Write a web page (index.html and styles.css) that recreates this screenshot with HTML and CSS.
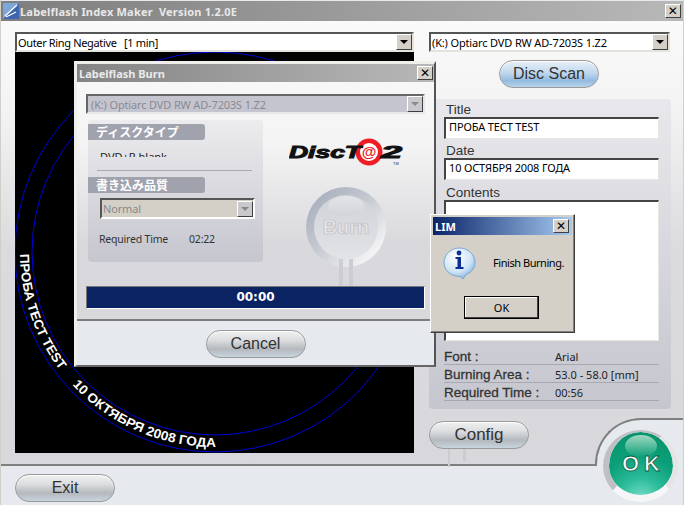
FILE: index.html
```html
<!DOCTYPE html>
<html lang="en">
<head>
<meta charset="utf-8">
<title>Labelflash Index Maker</title>
<link rel="stylesheet" href="styles.css">
</head>
<body>
<div class="app">
  <header class="titlebar">
    <svg class="app-icon" width="16" height="16" viewBox="0 0 16 16"><rect width="16" height="16" fill="#7ea6d8"/><path d="M0 16 16 0V16Z" fill="#3d66b0"/><path d="M2 13 14 2M3 14l10-5" stroke="#fff" stroke-width="1.2"/></svg>
    <span class="titlebar-text">Labelflash Index Maker&nbsp; Version 1.2.0E</span>
    <span class="close-btn">✕</span>
  </header>
  <main class="main">
    <section class="left">
      <div class="select select-wide"><span class="select-text">Outer Ring Negative&nbsp;&nbsp; [1 min]</span><span class="arrow"></span></div>
      <div class="canvas">
        <svg width="399" height="401" viewBox="0 0 399 401">
          <defs><path id="ring" d="M5 200A195 195 0 0 0 395 200"/></defs>
          <circle cx="200" cy="200" r="200" class="ring-line"/>
          <circle cx="200" cy="200" r="183" class="ring-line"/>
          <text class="ring-text"><textPath href="#ring" startOffset="2" textLength="125" lengthAdjust="spacingAndGlyphs">ПРОБА ТЕСТ TEST</textPath></text>
          <text class="ring-text"><textPath href="#ring" startOffset="146" textLength="161" lengthAdjust="spacingAndGlyphs">10 ОКТЯБРЯ 2008 ГОДА</textPath></text>
        </svg>
      </div>
    </section>
    <section class="right">
      <div class="select select-drive"><span class="select-text">(K:) Optiarc DVD RW AD-7203S 1.Z2</span><span class="arrow"></span></div>
      <button class="pill pill-blue scan">Disc Scan</button>
      <div class="panel">
        <label class="field-label">Title</label>
        <div class="input">ПРОБА ТЕСТ TEST</div>
        <label class="field-label">Date</label>
        <div class="input input-date">10 ОСТЯБРЯ 2008 ГОДА</div>
        <label class="field-label">Contents</label>
        <div class="input textarea"></div>
        <dl class="stats">
          <div class="stat"><dt>Font :</dt><dd>Arial</dd></div>
          <div class="stat"><dt>Burning Area :</dt><dd>53.0 - 58.0 [mm]</dd></div>
          <div class="stat"><dt>Required Time :</dt><dd>00:56</dd></div>
        </dl>
      </div>
      <button class="pill config">Config</button>
      <div class="pipes"><i class="pipe-long"></i><i class="pipe-short"></i></div>
    </section>
  </main>
  <footer class="footer">
    <button class="pill">Exit</button>
  </footer>

  <div class="ok-notch"></div>
  <button class="ok-btn"><span class="ok-gloss"></span><span class="ok-text">OK</span></button>

  <div class="burn">
    <div class="burn-title"><span>Labelflash Burn</span><span class="close-btn">✕</span></div>
    <div class="burn-body">
      <div class="select select-disabled"><span class="select-text">(K:) Optiarc DVD RW AD-7203S 1.Z2</span><span class="arrow arrow-off"></span></div>
      <div class="burn-row">
        <div class="burn-panel">
          <div class="tag">ディスクタイプ</div>
          <div class="clip"><span>DVD+R blank</span></div>
          <div class="rule"></div>
          <div class="tag tag-second">書き込み品質</div>
          <div class="select select-quality"><span class="select-text">Normal</span><span class="arrow arrow-off"></span></div>
          <div class="req"><span>Required Time</span><span>02:22</span></div>
        </div>
        <div class="burn-side">
          <svg class="logo" width="114" height="30" viewBox="0 0 114 30">
            <circle cx="80" cy="15" r="13.5" fill="#ee1c25"/>
            <circle cx="80" cy="15" r="9" fill="#fff"/>
            <text x="0" y="21" class="logo-text" textLength="72" lengthAdjust="spacingAndGlyphs">DiscT</text>
            <text x="80" y="20" class="logo-at" text-anchor="middle">@</text>
            <text x="92" y="21" class="logo-text" textLength="21" lengthAdjust="spacingAndGlyphs">2</text>
            <text x="104" y="28" class="logo-tm">TM</text>
          </svg>
          <div class="burn-btn"><div class="burn-face"><span class="burn-label">Burn</span></div></div>
          <div class="burn-pipes"><i></i><i></i></div>
        </div>
      </div>
      <div class="progress">00:00</div>
    </div>
    <div class="burn-foot"><button class="pill">Cancel</button></div>
  </div>

  <div class="lim">
    <div class="lim-title"><span>LIM</span><span class="close-btn">✕</span></div>
    <div class="lim-msg">
      <svg width="33" height="33" viewBox="0 0 33 33">
        <defs><radialGradient id="bub" cx=".4" cy=".3" r=".8"><stop offset="0" stop-color="#fff"/><stop offset=".6" stop-color="#cfe4f6"/><stop offset="1" stop-color="#6ca2d6"/></radialGradient></defs>
        <path d="M16.5 1C25 1 32 7.500 32 15.500 32 22 27.500 26 23 27.500L20 32 17.500 30 17 29.500C8 29.500 1 23.500 1 15.500 1 7.500 8 1 16.500 1Z" fill="url(#bub)" stroke="#7aa8d4"/>
        <circle cx="16" cy="6" r="2.400" fill="#0c2f94"/>
        <path d="M12.500 10H18V20H20.500V22H12.500V20H14.500V12H12.500Z" fill="#0c2f94"/>
      </svg>
      <span>Finish Burning.</span>
    </div>
    <button class="lim-ok">OK</button>
  </div>
</div>
</body>
</html>
```

FILE: styles.css
```css
* { box-sizing: border-box; }
html, body { margin: 0; padding: 0; }
body { width: 684px; height: 505px; overflow: hidden; font-family: "Noto Sans", "Liberation Sans", sans-serif; }

.app {
  position: relative;
  width: 684px;
  height: 505px;
  overflow: hidden;
  display: flex;
  flex-direction: column;
  background: #e6eaee;
  border-left: 1px solid #d0cfca;
  border-right: 1px solid #d0cfca;
}

.titlebar {
  height: 20px;
  margin-top: 1px;
  flex: none;
  display: flex;
  align-items: center;
  padding: 0 2px 0 2px;
  background: linear-gradient(90deg, #7e7e7e, #b8b8b8);
  color: #e8e8e8;
  font: bold 11px "Noto Sans", sans-serif;
  letter-spacing: 0.2px;
}
.app-icon { flex: none; margin-right: 1px; }
.titlebar-text { flex: 1; }

.close-btn {
  flex: none;
  width: 16px;
  height: 14px;
  display: flex;
  align-items: center;
  justify-content: center;
  background: #d4d0c8;
  border: 1px solid;
  border-color: #fff #404040 #404040 #fff;
  color: #000;
  font: bold 12px "DejaVu Sans", sans-serif;
}

.main {
  height: 445px;
  flex: none;
  display: flex;
  gap: 15px;
  padding: 11px 0 0 14px;
  background: linear-gradient(180deg, #fafafa 0, #f3f3f3 90px, #dbdbdf 230px, #d8d8dc 100%);
  border-bottom: 2px solid #7f7f7f;
}
.left { width: 399px; display: flex; flex-direction: column; }
.right { width: 242px; display: flex; flex-direction: column; align-items: flex-start; }

.select {
  display: flex;
  align-items: center;
  flex: none;
  height: 20px;
  background: #fff;
  border: 2px solid;
  border-color: #555 #e4e2dc #e4e2dc #555;
  font: 11px "Noto Sans", sans-serif;
  color: #000;
}
.select-text { flex: 1; padding-left: 1px; white-space: nowrap; overflow: hidden; letter-spacing: -0.15px; }
.select-wide { width: 399px; }
.select-wide .select-text { letter-spacing: -0.35px; }
.select-drive { width: 241px; }
.arrow {
  flex: none;
  width: 16px;
  height: 16px;
  background: #d4d0c8;
  border: 1px solid;
  border-color: #fff #404040 #404040 #fff;
  position: relative;
}
.arrow::after {
  content: "";
  position: absolute;
  left: 3px;
  top: 5px;
  border: 4px solid transparent;
  border-top: 4px solid #000;
  border-bottom: 0;
}
.arrow-off { background: #c9c8cc; }
.arrow-off::after { border-top-color: #8a8a8a; }

.canvas { height: 401px; background: #000; flex: none; }
.canvas svg { display: block; }
.ring-line { fill: none; stroke: #0000d8; stroke-width: 1; }
.ring-text { fill: #fff; font: bold 13px "Liberation Sans", sans-serif; }

.pill {
  width: 100px;
  height: 28px;
  flex: none;
  padding: 0;
  border: 1px solid #9a9a9a;
  border-radius: 14px;
  background: linear-gradient(180deg, #f0f0f0 0, #dcdee0 35%, #b4b9bd 70%, #c8d4de 100%);
  color: #333;
  font: 16px "Liberation Sans", sans-serif;
  box-shadow: inset 0 1px 1px #fff;
}
.pill-blue { background: linear-gradient(180deg, #e8f0f8 0, #c0d8ee 45%, #94bbdf 75%, #b6d2ea 100%); }
.scan { margin: 8px 0 0 70px; }

.panel {
  width: 242px;
  height: 310px;
  margin-top: 11px;
  padding: 4px 12px 0 15px;
  border-radius: 4px;
  background: linear-gradient(180deg, #e8e8ec, #c5c6ce);
  flex: none;
}
.field-label { display: block; height: 14px; margin-left: 2px; font: 13.5px/14px "Liberation Sans", sans-serif; color: #333; }
.input {
  width: 215px;
  height: 22px;
  margin-bottom: 5px;
  padding: 1px 3px 0 3px;
  background: #fff;
  border: 1px solid;
  border-width: 2px 1px 1px 2px;
  border-color: #444 #e8e6e0 #e8e6e0 #444;
  font: 11px/14px "Noto Sans", sans-serif;
  letter-spacing: -0.15px;
  color: #000;
}
.input-date { margin-bottom: 6px; }
.textarea { height: 141px; margin-bottom: 0; }
.stats { margin: 6px 0 0; padding: 0; width: 215px; }
.stat {
  display: flex;
  height: 18px;
  padding-top: 1px;
  align-items: center;
  border-bottom: 1px solid #a8a8b2;
}
.stat dt { width: 111px; font: 13.5px "Liberation Sans", sans-serif; color: #333; -webkit-text-stroke: 0.3px #333; }
.stat dd { margin: 0; font: 11px "Noto Sans", sans-serif; color: #222; }

.config { margin-top: 12px; font-size: 17px; }
.pipes { display: flex; align-items: flex-start; gap: 13px; margin-left: 19px; flex: none; }
.pipe-long { width: 2px; height: 18px; background: #ccccd0; }
.pipe-short { width: 3px; height: 12px; background: #ccccd0; }

.footer { flex: 1; padding: 8px 0 0 14px; }

.ok-notch {
  position: absolute;
  left: 594px;
  top: 418px;
  width: 90px;
  height: 48px;
  background: #e6eaee;
  border-left: 2px solid #7f7f7f;
  border-top: 2px solid #7f7f7f;
  border-top-left-radius: 46px;
}
.ok-btn {
  position: absolute;
  left: 602px;
  top: 430px;
  width: 75px;
  height: 72px;
  padding: 0;
  border-style: solid;
  border-width: 2px 5px 7px 6px;
  border-color: #bfc0c4 #e4e4e6 #f6f6f8 #c0c0c4;
  border-radius: 50%;
  background: radial-gradient(circle at 50% 108%, #7be0cc 0, #2abb98 30%, #0ba079 58%, #079068 100%);
  background-clip: padding-box;
  overflow: hidden;
  display: flex;
  align-items: center;
  justify-content: center;
}
.ok-gloss {
  position: absolute;
  left: 16px;
  top: 3px;
  width: 32px;
  height: 22px;
  border-radius: 50%;
  background: linear-gradient(180deg, #9fd8c2, #0ea078);
}
.ok-text {
  position: relative;
  color: #fff;
  font: bold 22px "Liberation Sans", sans-serif;
  letter-spacing: 5px;
  margin-left: 5px;
  -webkit-text-stroke: 0.8px #0a5f46;
}

/* Burn dialog */
.burn {
  position: absolute;
  left: 73px;
  top: 61px;
  width: 362px;
  height: 306px;
  display: flex;
  flex-direction: column;
  background: linear-gradient(180deg, #f8f8f8 0, #f4f4f4 80px, #d9d9dd 180px, #d8d8dc 100%);
  border-style: solid;
  border-width: 3px 2px 2px 3px;
  border-color: #f0efec #555 #666 #f0efec;
}
.burn-title {
  height: 18px;
  flex: none;
  display: flex;
  align-items: center;
  justify-content: space-between;
  padding: 0 1px 0 2px;
  background: linear-gradient(90deg, #848484, #b8b8b8);
  color: #eaeaea;
  font: bold 11px "Noto Sans", sans-serif;
}
.burn-body { flex: none; padding: 12px 9px 0 9px; display: flex; flex-direction: column; }
.select-disabled {
  width: 339px;
  height: 20px;
  background: #c5c5cf;
  color: #8a8a92;
  border-color: #666 #e8e8e8 #e8e8e8 #666;
}
.select-disabled .select-text { padding-left: 3px; }
.burn-row { display: flex; align-items: flex-start; height: 166px; margin-top: 6px; flex: none; }
.burn-panel {
  width: 175px;
  height: 142px;
  margin-left: 2px;
  padding-top: 4px;
  flex: none;
  border-radius: 4px;
  background: linear-gradient(180deg, #ececee, #c5c6ce);
}
.tag {
  width: 117px;
  height: 16px;
  padding-left: 8px;
  border-radius: 0 3px 3px 0;
  background: #a0a2ae;
  color: #fff;
  font: bold 12px/16px "Noto Sans CJK JP", sans-serif;
}
.clip {
  height: 8px;
  margin: 9px 0 0 12px;
  overflow: hidden;
  font: 11px/14px "Noto Sans", sans-serif;
  color: #222;
}
.clip span { display: block; margin-top: 1px; }
.rule { height: 1px; margin: 13px 11px 0 9px; background: #a8a8b2; }
.tag-second { margin-top: 6px; }
.select-quality {
  width: 155px;
  height: 21px;
  margin: 5px 0 0 12px;
  background: #d4d0c8;
  color: #8a8a8a;
  border-color: #555 #fff #fff #555;
}
.req {
  display: flex;
  gap: 21px;
  margin: 13px 0 0 11px;
  font: 10.5px "Noto Sans", sans-serif;
  letter-spacing: -0.2px;
  color: #333;
}
.burn-side { flex: 1; display: flex; flex-direction: column; align-items: center; padding-left: 4px; }
.logo { margin-top: 17px; flex: none; }
.logo-text { font: italic bold 17px "Liberation Sans", sans-serif; fill: #111; stroke: #111; stroke-width: 1px; }
.logo-at { font: bold 15px "Liberation Sans", sans-serif; fill: #ee1c25; }
.logo-tm { font: 4px "Liberation Sans", sans-serif; fill: #333; }
.burn-btn {
  width: 80px;
  height: 80px;
  margin-top: 20px;
  padding: 8px;
  flex: none;
  border-radius: 50%;
  background: linear-gradient(135deg, #a0a8b8 0, #c4c8d0 45%, #f4f4f6 85%);
}
.burn-face {
  position: relative;
  width: 64px;
  height: 64px;
  border-radius: 50%;
  background: linear-gradient(180deg, #d0d2d8, #e2e3e6);
  display: flex;
  align-items: center;
  justify-content: center;
}
.burn-face::before {
  content: "";
  position: absolute;
  left: 14px;
  top: 1px;
  width: 36px;
  height: 20px;
  border-radius: 50%;
  background: linear-gradient(180deg, #e4e5e9, #d2d4d9);
}
.burn-label {
  position: relative;
  color: #e6e6e8;
  font: bold 20px "Liberation Sans", sans-serif;
  -webkit-text-stroke: 0.7px #bcbcc2;
}
.burn-pipes { display: flex; gap: 6px; height: 27px; margin-top: -8px; flex: none; }
.burn-pipes i { width: 4px; background: #ccccd4; }
.progress {
  width: 339px;
  height: 23px;
  flex: none;
  background: #0a2463;
  border: 1px solid;
  border-color: #777 #fff #fff #777;
  color: #fff;
  text-align: center;
  font: bold 12px/20px "DejaVu Sans", sans-serif;
}
.burn-foot {
  flex: 1;
  margin-top: 10px;
  display: flex;
  justify-content: center;
  padding-top: 9px;
  background: #e6eaee;
  border-top: 2px solid #7c7c7c;
}

/* Message box */
.lim {
  position: absolute;
  left: 429px;
  top: 214px;
  width: 145px;
  height: 119px;
  display: flex;
  flex-direction: column;
  background: #d4d0c8;
  border: 1px solid;
  border-color: #fff #404040 #404040 #fff;
  box-shadow: inset -1px -1px 0 #808080;
  padding: 2px;
}
.lim-title {
  height: 18px;
  flex: none;
  display: flex;
  align-items: center;
  justify-content: space-between;
  padding: 0 3px 0 2px;
  background: linear-gradient(90deg, #0a246a, #a6caf0);
  color: #fff;
  font: bold 11px "Noto Sans", sans-serif;
}
.lim-msg {
  display: flex;
  align-items: flex-start;
  gap: 17px;
  padding: 12px 0 0 10px;
  font: 11px "Noto Sans", sans-serif;
  letter-spacing: -0.45px;
  color: #000;
}
.lim-msg span { margin-top: 8px; white-space: nowrap; }
.lim-ok {
  width: 75px;
  height: 23px;
  margin: 16px 0 0 31px;
  padding: 0;
  background: #d4d0c8;
  border: 1px solid #000;
  box-shadow: inset -1px -1px 0 #404040, inset 1px 1px 0 #fff;
  font: 11px "Noto Sans", sans-serif;
  color: #000;
}
```
